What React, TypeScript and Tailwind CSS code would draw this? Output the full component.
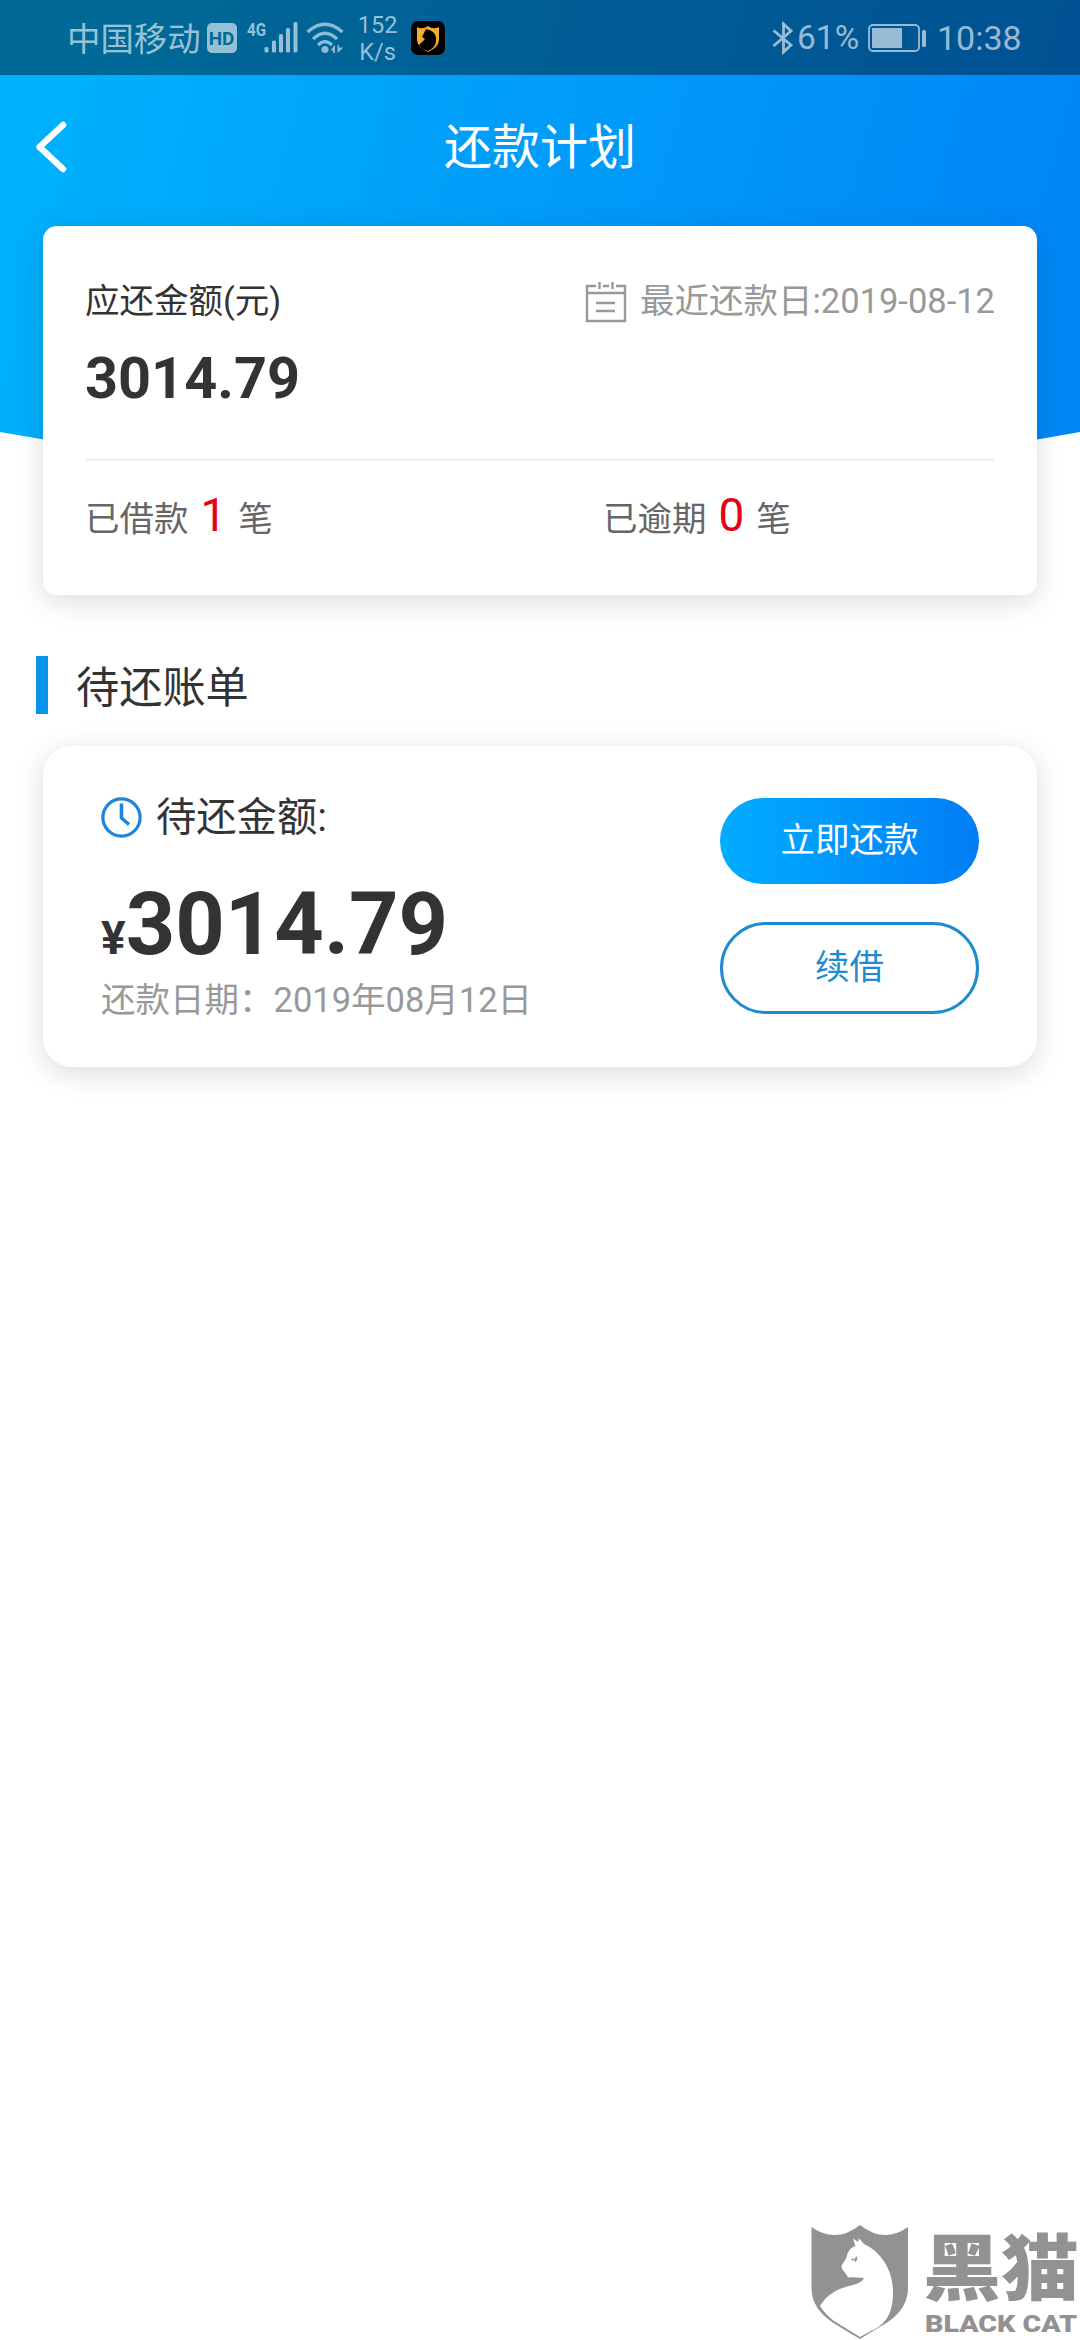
import { ReactNode } from "react";

export default function App() {
  return (
    <div className="relative w-[1080px] h-[2340px] overflow-hidden bg-white text-[#333] whitespace-nowrap font-['Roboto','Noto_Sans_CJK_SC',sans-serif]">
      {/* blue backdrop with the curved bottom edge */}
      <div className="absolute inset-x-0 top-0 h-[500px] bg-[linear-gradient(105deg,#00b0fc_8%,#0087f6_92%)] [clip-path:path('M0_0H1080V432Q540_530_0_432Z')]"></div>

      <div className="relative flex flex-col h-full">
        <StatusBar />
        <Header />

        <main className="flex flex-col px-[43px] grow">
          <SummaryCard />

          <div className="flex items-center mt-[61px] -ml-[7px] h-[58px] gap-7">
            <div className="w-3 h-full bg-[#0695ea]"></div>
            <h2 className="pt-[7px] text-[43.2px] leading-[58px]">待还账单</h2>
          </div>

          <BillCard />
        </main>

        <Watermark />
      </div>
    </div>
  );
}

function StatusBar() {
  return (
    <div className="flex items-center justify-between h-[75px] bg-black/40 pl-[67px] pr-[61px] text-white/60 text-[34px]">
      <div className="flex items-center h-full">
        <span className="pt-[4px] text-[33.4px] leading-[75px]">中国移动</span>
        <span className="ml-[6px] mt-px w-[30px] h-[30px] rounded-[5px] bg-[#94c1d6] text-[#016a94] text-[19px] leading-[31px] font-bold text-center">HD</span>
        <svg className="ml-[8px] mt-[-1px]" width="54" height="46" viewBox="0 -6 54 46" fill="#94c1d6">
          <text x="2" y="16" fontSize="19" fontWeight="700" fontFamily="Roboto, sans-serif" textLength="19" lengthAdjust="spacingAndGlyphs">4G</text>
          <rect x="19.500" y="27" width="4" height="5.500" rx="1.500" />
          <rect x="27" y="20.500" width="4" height="12" rx="1.500" />
          <rect x="34" y="14" width="4" height="18.500" rx="1.500" />
          <rect x="41" y="8" width="4" height="24.500" rx="1.500" />
          <rect x="48.500" y="2" width="4" height="30.500" rx="1.500" />
        </svg>
        <svg className="ml-[7px]" width="40" height="34" viewBox="0 0 40 34" fill="none" stroke="#8bbcd6" strokeWidth="3.200">
          <path d="M1.500 11Q19 -4.500 36.500 11" />
          <path d="M7 18Q19 6.500 31 18" />
          <path d="M12 24Q19 17 26 24" />
          <circle cx="19" cy="28.500" r="3.500" fill="#8bbcd6" stroke="none" />
          <path d="M29 23.500V32H27V29.500H24.500zM31.500 32V24H33V26.500H37.500z" fill="#8bbcd6" stroke="none" />
        </svg>
        <div className="flex flex-col items-center w-[42px] ml-[11px] pt-[2px] text-[23.500px] leading-[27px]">
          <span>152</span>
          <span>K/s</span>
        </div>
        <svg className="ml-[12px] mt-px" width="34" height="34" viewBox="0 0 34 34">
          <rect width="34" height="34" rx="7" fill="#000" />
          <path d="M6 6q6 3 11 -1q5 4 11 1v13q0 7 -11 12q-11 -5 -11 -12z" fill="#f5ab2b" />
          <path d="M15 8l-2 4l-2 4l3 2l-6 6q3 5 9 6q8 -4 8 -10q1 -10 -10 -12z" fill="#000" />
        </svg>
      </div>

      <div className="flex items-center h-full">
        <svg width="22" height="34" viewBox="0 0 22 34" fill="none" stroke="currentColor" strokeWidth="2.800">
          <path d="M1.500 9.500L19 24L11.500 31V3L19 10L1.500 25" />
        </svg>
        <span className="ml-[3px] w-[62px] text-[33.500px] leading-[76px]">61%</span>
        <svg className="ml-[9px]" width="60" height="30" viewBox="0 0 60 30" fill="none">
          <rect x="1" y="2" width="50" height="26" rx="4" stroke="currentColor" strokeWidth="1.800" />
          <rect x="4" y="5" width="30" height="20" rx="1" fill="currentColor" />
          <rect x="54" y="7" width="4" height="17" rx="1.500" fill="currentColor" />
        </svg>
        <span className="ml-[9px] w-[82px] text-[34px] leading-[76px]">10:38</span>
      </div>
    </div>
  );
}

function Header() {
  return (
    <header className="grid grid-cols-[200px_1fr_200px] items-center h-[151px] pb-[5px]">
      <button className="pl-[35px] pb-[2px]">
        <svg width="32" height="52" viewBox="0 0 32 52" fill="none" stroke="#fff" strokeWidth="6.500" strokeLinejoin="round">
          <path d="M28 4L4.500 26L28 48" strokeLinecap="round" />
        </svg>
      </button>
      <h1 className="text-center text-white text-[48px] leading-[60px]">还款计划</h1>
    </header>
  );
}

function SummaryCard() {
  return (
    <section className="h-[369px] px-[42px] rounded-[14px] bg-white shadow-[0_6px_29px_rgba(0,0,0,0.14)]">
      <div className="flex items-center justify-between pt-[49px] text-[34.5px] leading-[52px]">
        <span>应还金额(元)</span>
        <div className="flex items-center text-[#999]">
          <svg className="mr-[13px] mt-px" width="42" height="42" viewBox="0 0 42 42" fill="none" stroke="currentColor" strokeWidth="2.400">
            <path d="M11 5H2V40H40V5H31M18 5H24M2 12H40M11 22H30M11 30H30" />
            <path d="M14.500 1V8M27.500 1V8" />
          </svg>
          <span>最近还款日:2019-08-12</span>
        </div>
      </div>
      <div className="mt-[16px] text-[57.600px] leading-[72px] font-bold">3014.79</div>

      <div className="mt-[43px] h-[3px] bg-[#f2f2f2]"></div>

      <div className="flex mt-[22px] text-[#666]">
        <Count label="已借款">1</Count>
        <Count label="已逾期">0</Count>
      </div>
    </section>
  );
}

function Count({ label, children }: { label: string; children: ReactNode }) {
  return (
    <div className="flex items-baseline shrink-0 w-[518px] text-[34.5px] leading-[64px]">
      <span>{label}</span>
      <span className="mx-[12px] text-[46px] text-[#e60012]">{children}</span>
      <span>笔</span>
    </div>
  );
}

function BillCard() {
  return (
    <section className="flex justify-between mt-8 h-[321px] pl-[58px] pr-[58px] rounded-[29px] bg-white shadow-[0_6px_29px_rgba(0,0,0,0.14)]">
      <div className="flex flex-col pt-[41px]">
        <div className="flex items-center gap-[13px] text-[40.300px] leading-[60px]">
          <svg width="42" height="42" viewBox="0 0 42 42" fill="none" stroke="#1e84dc" strokeWidth="3.200">
            <circle cx="20.500" cy="20.500" r="18.600" />
            <path d="M20.500 6.500V21L28 27.500" strokeWidth="3.600" />
          </svg>
          <span className="pt-px">待还金额:</span>
        </div>
        <div className="mt-[27px] font-bold text-[86.400px] leading-[100px]">
          <span className="text-[46px]">¥</span>3014.79
        </div>
        <div className="mt-[-12px] text-[34.5px] leading-[48px] text-[#999]">还款日期：2019年08月12日</div>
      </div>

      <div className="flex flex-col gap-[38px] pt-[52px] w-[259px] text-[34.5px]">
        <button className="h-[86px] rounded-full bg-linear-to-r from-[#00adff] to-[#007df6] text-white pb-[1px]">立即还款</button>
        <button className="h-[92px] rounded-full border-3 border-[#1d8dcf] text-[#1d8dcf] pb-[1px]">续借</button>
      </div>
    </section>
  );
}

function Watermark() {
  return (
    <div className="flex items-end justify-end h-[116px] pr-px">
      <svg width="98" height="116" viewBox="0 0 98 116">
        <path d="M0.500 3Q25 20 49 1Q73 20 97 3V64Q97 84 77 98Q62 107 49 115Q35 107 21 98Q0.500 84 0.500 64z" fill="#939192" />
        <path d="M42 14.500L47 18L48 14.500L53 20C72 29 82 48 82 68C82 88 76 100 60 107L49 113L23 97Q14 90 9 82C17 68 30 64 42 61Q52 58 53 54Q42 53 37 53.500C34 47 31 47 30.500 42.500C32 38 36 35 36 31Q38 24 44.500 22z" fill="#fff" />
        <path d="M45.500 32q2 4 -1.500 6q-2 -2 1.500 -6zM40 35.500l3.500 -1.500l-1.500 3z" fill="#939192" />
      </svg>
      <svg className="ml-[15px]" width="155" height="150" viewBox="0 0 155 150" fill="#939192">
        <text x="-1" y="104" fontSize="72" fontWeight="900" fontFamily="'Noto Sans CJK SC', sans-serif" textLength="156" lengthAdjust="spacingAndGlyphs">黑猫</text>
        <text x="1" y="142" fontSize="23" fontWeight="900" fontFamily="Roboto, sans-serif" textLength="152" lengthAdjust="spacingAndGlyphs">BLACK CAT</text>
      </svg>
    </div>
  );
}
